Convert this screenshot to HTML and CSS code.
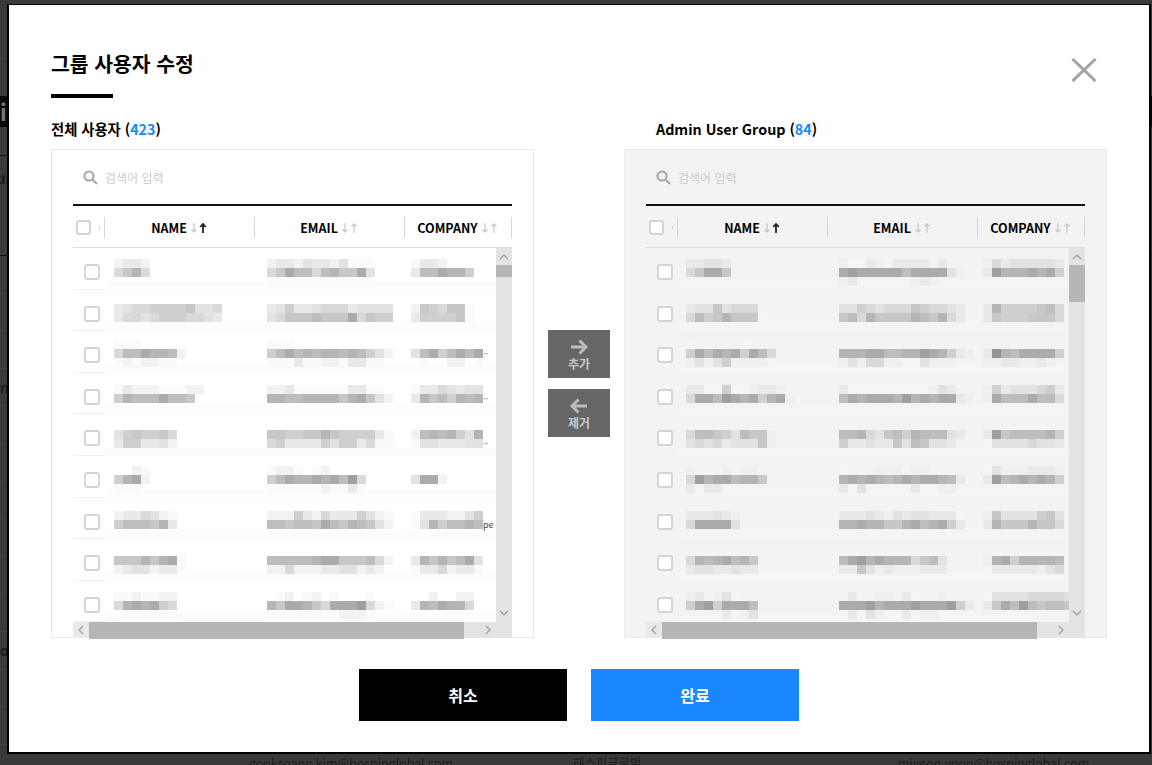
FILE: index.html
```html
<!DOCTYPE html>
<html lang="ko">
<head>
<meta charset="utf-8">
<title>그룹 사용자 수정</title>
<link rel="stylesheet" href="styles.css">
</head>
<body>
<div class="page">
  <div class="bg-row bg-top"></div>
  <div class="bg-tab"><span>i</span></div>
  <div class="bg-row bg-gap"></div>
  <div class="bg-row bg-filter"><span>us</span></div>
  <div class="bg-row bg-list"></div>
  <div class="bg-row bg-list"></div>
  <div class="bg-row bg-list"></div>
  <div class="bg-row bg-list"><span>n</span></div>
  <div class="bg-row bg-list"></div>
  <div class="bg-row bg-list"></div>
  <div class="bg-row bg-list"></div>
  <div class="bg-row bg-list"></div>
  <div class="bg-row bg-list"></div>
  <div class="bg-row bg-list"></div>
  <div class="bg-row bg-list"><span>oi</span></div>
  <div class="bg-row bg-list"></div>
  <div class="bg-row bg-list"></div>
  <div class="bg-emails">
    <span>gooksoang.kim@hospinglobal.com</span>
    <span>헤스피글로벌</span>
    <span>miyeon.yoon@hospinglobal.com</span>
  </div>
</div>

<div class="modal">
  <div class="modal-head">
    <h1 class="title">그룹 사용자 수정</h1>
    <svg class="close" viewBox="0 0 26 24" width="26" height="24"><path d="M1.5 1 24.5 23M24.5 1 1.5 23"/></svg>
  </div>
  <div class="title-rule"></div>

  <div class="columns">
    <section class="col">
      <h2 class="label">전체 사용자 (<b>423</b>)</h2>
      <div class="panel" data-side="left">
        <div class="search">
          <svg class="search-icon" viewBox="0 0 15 15" width="15" height="15"><circle cx="6" cy="6" r="4.6"/><path d="M9.6 9.6 14 14"/></svg>
          <span>검색어 입력</span>
        </div>
        <div class="thead">
          <div class="th th-check"><span class="box box-head"></span><span class="mark"></span></div>
          <div class="th th-wide">NAME<svg class="sort" viewBox="0 0 18 10" width="18" height="10"><path class="off" d="M4 0v9M1.5 6.5 4 9l2.5-2.5"/><path class="on" d="M13 10V1M10.2 4 13 1l2.8 3"/></svg></div>
          <div class="th th-wide">EMAIL<svg class="sort" viewBox="0 0 18 10" width="18" height="10"><path class="off" d="M4 0v9M1.5 6.5 4 9l2.5-2.5"/><path class="off" d="M13 10V1M10.5 3.5 13 1l2.5 2.5"/></svg></div>
          <div class="th th-last">COMPANY<svg class="sort" viewBox="0 0 18 10" width="18" height="10"><path class="off" d="M4 0v9M1.5 6.5 4 9l2.5-2.5"/><path class="off" d="M13 10V1M10.5 3.5 13 1l2.5 2.5"/></svg></div>
        </div>
        <div class="tbody">
          <div class="rows"></div>
          <div class="vbar">
            <svg class="chev" viewBox="0 0 16 17" width="16" height="17"><path d="M4 11l4-4 4 4"/></svg>
            <div class="vtrack"><div class="vthumb vthumb-left"></div></div>
            <svg class="chev" viewBox="0 0 16 17" width="16" height="17"><path d="M4 6l4 4 4-4"/></svg>
          </div>
        </div>
        <div class="hbar">
          <svg class="chev chev-start" viewBox="0 0 16 16" width="16" height="16"><path d="M10 4 6 8l4 4"/></svg>
          <div class="hthumb"></div>
          <svg class="chev" viewBox="0 0 16 16" width="16" height="16"><path d="M6 4l4 4-4 4"/></svg>
          <div class="corner"></div>
        </div>
      </div>
    </section>

    <div class="movers">
      <button class="move" type="button">
        <svg viewBox="0 0 18 16" width="18" height="16"><path d="M1 8H16M9.5 1.5 16 8l-6.500 6.500"/></svg>
        <span>추가</span>
      </button>
      <button class="move" type="button">
        <svg viewBox="0 0 18 16" width="18" height="16"><path d="M17 8H2M8.500 1.500 2 8l6.500 6.500"/></svg>
        <span>제거</span>
      </button>
    </div>

    <section class="col">
      <h2 class="label label-right">Admin User Group (<b>84</b>)</h2>
      <div class="panel panel-right" data-side="right">
        <div class="search">
          <svg class="search-icon" viewBox="0 0 15 15" width="15" height="15"><circle cx="6" cy="6" r="4.6"/><path d="M9.6 9.6 14 14"/></svg>
          <span>검색어 입력</span>
        </div>
        <div class="thead">
          <div class="th th-check"><span class="box box-head"></span><span class="mark"></span></div>
          <div class="th th-wide">NAME<svg class="sort" viewBox="0 0 18 10" width="18" height="10"><path class="off" d="M4 0v9M1.5 6.5 4 9l2.5-2.5"/><path class="on" d="M13 10V1M10.2 4 13 1l2.8 3"/></svg></div>
          <div class="th th-wide">EMAIL<svg class="sort" viewBox="0 0 18 10" width="18" height="10"><path class="off" d="M4 0v9M1.5 6.5 4 9l2.5-2.5"/><path class="off" d="M13 10V1M10.5 3.5 13 1l2.5 2.5"/></svg></div>
          <div class="th th-last">COMPANY<svg class="sort" viewBox="0 0 18 10" width="18" height="10"><path class="off" d="M4 0v9M1.5 6.5 4 9l2.5-2.5"/><path class="off" d="M13 10V1M10.5 3.5 13 1l2.5 2.5"/></svg></div>
        </div>
        <div class="tbody">
          <div class="rows"></div>
          <div class="vbar">
            <svg class="chev" viewBox="0 0 16 17" width="16" height="17"><path d="M4 11l4-4 4 4"/></svg>
            <div class="vtrack"><div class="vthumb vthumb-right"></div></div>
            <svg class="chev" viewBox="0 0 16 17" width="16" height="17"><path d="M4 6l4 4 4-4"/></svg>
          </div>
        </div>
        <div class="hbar">
          <svg class="chev chev-start" viewBox="0 0 16 16" width="16" height="16"><path d="M10 4 6 8l4 4"/></svg>
          <div class="hthumb"></div>
          <svg class="chev" viewBox="0 0 16 16" width="16" height="16"><path d="M6 4l4 4-4 4"/></svg>
          <div class="corner"></div>
        </div>
      </div>
    </section>
  </div>

  <div class="actions">
    <button class="action action-cancel" type="button">취소</button>
    <button class="action action-done" type="button">완료</button>
  </div>
</div>
<script src="app.js"></script>
</body>
</html>
```
FILE: styles.css
```css
* { box-sizing: border-box; }
html, body { margin: 0; height: 100%; overflow: hidden; }
body {
  background: #3a3a3a;
  font-family: "Noto Sans CJK KR", "Noto Sans", sans-serif;
  color: #000;
}
button { font-family: inherit; border: 0; padding: 0; }

/* dimmed page behind the dialog */
.page { height: 765px; display: flex; flex-direction: column; overflow: hidden; color: #1c1c1c; font-size: 12.400px; }
.bg-row { flex: none; border-bottom: 1px solid #444; font-weight: 700; font-size: 14px; }
.bg-top { height: 59px; }
.bg-tab { flex: none; margin-top: 37px; height: 31px; background: #0b0b0b; color: #777; font-size: 22px; font-weight: 700; line-height: 31px; }
.bg-gap { height: 29px; border-bottom-color: #111; }
.bg-filter { height: 100px; border-bottom-color: #111; padding-top: 11px; font-size: 15px; text-indent: -4px; }
.bg-list { height: 37.600px; line-height: 37px; }
.bg-emails { margin-top: auto; margin-bottom: -7px; height: 18px; flex: none; display: grid; grid-template-columns: 324px 325px 1fr; padding-left: 249px; line-height: 18px; }

/* dialog */
.modal {
  position: fixed;
  left: 7px;
  top: 4px;
  width: 1144px;
  height: 750px;
  background: #fff;
  border: 2px solid #000;
  border-top-width: 1px;
  padding: 43px 42px 0;
}
.modal-head { display: flex; justify-content: space-between; align-items: flex-start; }
.title { margin: 0; font-size: 20.400px; line-height: 30px; font-weight: 700; }
.close { margin: 10px 10px 0 0; fill: none; stroke: #a3a3a3; stroke-width: 3; }
.title-rule { width: 62px; height: 4px; background: #000; margin-top: 12px; }

.columns { display: grid; grid-template-columns: 483px 90px 483px; margin-top: 21px; }
.label { margin: 0 0 10px; font-size: 14.300px; line-height: 20px; font-weight: 700; }
.label b { color: #1a87ff; font-weight: 700; }
.label-right { padding-left: 32px; }

.panel { height: 489px; border: 1px solid #e9e9e9; padding: 0 21px; background: #fff; }
.panel-right { background: #f3f3f3; }

.search { height: 54px; display: flex; align-items: center; gap: 7px; padding-left: 10px; font-size: 12px; color: #cbcbcb; }
.search-icon { fill: none; stroke: #a5a5a5; stroke-width: 2; }

.thead { height: 44px; padding-top: 2px; border-top: 2px solid #111; border-bottom: 1px solid #ddd; display: flex; align-items: center; font-size: 12.500px; font-weight: 700; }
.th { height: 21px; border-right: 1.500px solid #d6d6d6; display: flex; align-items: center; justify-content: center; }
.th-check { width: 32px; justify-content: flex-start; padding-left: 3px; }
.th-wide { width: 150px; }
.th-last { width: 107px; }
.sort { margin-left: 3px; fill: none; stroke-width: 1.300; }
.sort .off { stroke: #c9c9c9; }
.sort .on { stroke: #222; stroke-width: 1.800; }
.box { display: block; width: 16px; height: 16px; background: #fff; border: 2px solid #d4d4d4; border-radius: 3px; }
.box-head { width: 15px; height: 15px; }
.mark { width: 1px; height: 3px; background: #ccc; margin-left: 8px; }

.tbody { height: 374px; display: flex; }
.rows { width: 423px; height: 374px; overflow: hidden; }
.row { height: 41.600px; display: flex; overflow: hidden; }
.row-check { flex: none; width: 32px; padding: 16px 0 0 11px; border-bottom: 1px solid #f1f1f1; }
.row-main {
  flex: 1;
  display: grid;
  grid-template-columns: 153px 144px 1fr;
  overflow: hidden;
  background: linear-gradient(#fcfcfc, #fcfcfc) left bottom / 100% 9px no-repeat;
}
.panel-right .row-main { background-image: linear-gradient(#f4f4f4, #f4f4f4); }
.cell { padding-left: 9px; overflow: hidden; display: flex; align-items: flex-start; }
.panel-right .cell { padding-left: 8px; }
.mosaic { flex: none; }
.line { display: flex; height: 9px; }
.px { flex: none; width: 9px; height: 9px; }
.l1 { background: #fafafa; } .l2 { background: #f2f2f2; } .l3 { background: #e9e9e9; }
.l4 { background: #e2e2e2; } .l5 { background: #d9d9d9; } .l6 { background: #cfcfcf; }
.l7 { background: #c7c7c7; } .l8 { background: #bdbdbd; } .l9 { background: #b5b5b5; }
.la { background: #ababab; } .lb { background: #9f9f9f; } .lc { background: #939393; }
.panel-right .l1 { background: #f4f4f4; }
.panel-right .l2 { background: #efefef; }
.tail { flex: none; font-size: 9px; line-height: 9px; color: #999; letter-spacing: -1px; white-space: nowrap; }
.tail-dark { color: #444; font-size: 9px; letter-spacing: 0; }

.vbar { width: 16px; flex: none; background: #e3e3e3; display: flex; flex-direction: column; }
.vtrack { flex: 1; }
.vthumb { background: #b6b6b6; }
.vthumb-left { height: 12px; }
.vthumb-right { height: 37px; }
.chev { display: block; flex: none; fill: none; stroke: #9c9c9c; stroke-width: 1.200; }
.hbar { height: 16px; display: flex; background: #e3e3e3; }
.chev-start { background: #e9e9e9; }
.hthumb { width: 375px; height: 17px; background: #b6b6b6; }
.hbar .chev:not(.chev-start) { margin-left: 16px; }
.corner { width: 16px; }

.movers { display: flex; flex-direction: column; align-items: center; gap: 11px; padding-top: 211px; }
.move { width: 62px; height: 48px; background: #666; color: #c9c9c9; font-size: 12px; font-weight: 700; display: flex; flex-direction: column; align-items: center; padding-top: 9px; line-height: 17px; }
.move svg { display: block; fill: none; stroke: #bcbcbc; stroke-width: 3; }

.actions { display: flex; justify-content: center; gap: 24px; margin-top: 31px; }
.action { width: 208px; height: 52px; color: #fff; font-size: 16px; font-weight: 700; }
.action-cancel { background: #000; }
.action-done { background: #1a87ff; }
```
FILE: app.js
```js
// Anonymised (pixelated) table content: each row holds the y of its mosaic and
// three columns of shade strings, one string per 9px line.
var DATA = {
  left: [
    [259, ["2332","5795"], ["233243324111","57a8858977a4","111111111111"], ["1332","388a996"], ""],
    [304, ["345566667445","355456665543"], ["34633455534444","45777877 7a5766"], ["276577 1","366667 1"], ""],
    [340, ["11100000","588a9982","12122110"], ["11100000000000","68a89899898642","11131122133110"], ["00000000","48a68a8a","01002201"], "···"],
    [385, ["1322211122","69888a8870"], ["22311111133110","9988999979a742"], ["13354344","39786989"], "···"],
    [430, ["4676675","3663342"], ["77667797666631","56333364663511"], ["289896 49","14433344"], "···"],
    [466, ["0021","69a2","1110"], ["12210120000","68a99a9a8b5","11111121131"], ["","4aa2"], ""],
    [511, ["2335421","6888793"], ["22263253336421","88788 7a8798742"], ["13332246","14968898"], "pe"],
    [556, ["77797 9a1","23442331"], ["8888 89aa77785 2","22 52223344232"], ["39797 8a4","13352331"], ""],
    [592, ["1121122","59a9a65","0111111"], ["01201201000100","97aa975aaab521","11111111222100"], ["0020022","3 98a995"], ""]
  ],
  right: [
    [259, ["33443","57aa7"], ["21132033330300","abaaaaa8aaaa42","23000000232000"], ["253444443","3b99 9a9a6"], ""],
    [304, ["344745550","586797771"], ["44654555765543","78597777987953"], ["396666785","376667775"], ""],
    [340, ["1000001100","6a8a9a6a85","2424622221"], ["","9 99aa889 9ba9632","24255221142220"], ["","3c98aaaa6","22332232"], ""],
    [385, ["3311611233200","5aa8ba9a69a2"], ["31111111112430","8a9aaa9b9a9aa32"], ["263444563","2a888a885"], ""],
    [430, ["5887648772","4545344472"], ["88954786988843","63343374874430"], ["3b7888896","144445443"], ""],
    [466, ["200020220","5b9aa8997","303300000"], ["100022202200","9a9a989a9aa9831","31410000311 22"], ["142223332","3b89a9a96","001110110"], ""],
    [511, ["333432","5aaaa4"], ["33343243443331","99a99779a89a63"], ["274444674","397779775"], ""],
    [556, ["59 89a897","34433433"], ["8ab9a9995784","337423222333"], ["29a699998","133333245"], ""],
    [592, ["23024 1","6ab6aaa8","00003124"], ["030022031002","aaab9aaabaaab63","030420030220"], ["1444455554","37a8b87887"], ""]
  ]
};

function mosaic(lines) {
  var root = document.createElement("div");
  root.className = "mosaic";
  lines.forEach(function (text) {
    var line = document.createElement("div");
    line.className = "line";
    text.replace(/\s/g, "").split("").forEach(function (ch) {
      var px = document.createElement("span");
      px.className = "px" + (ch === "0" ? "" : " l" + ch);
      line.appendChild(px);
    });
    root.appendChild(line);
  });
  return root;
}

document.querySelectorAll(".panel").forEach(function (panel) {
  var rows = panel.querySelector(".rows");
  DATA[panel.dataset.side].forEach(function (item, i) {
    var row = document.createElement("div");
    row.className = "row";

    var check = document.createElement("div");
    check.className = "row-check";
    var box = document.createElement("span");
    box.className = "box";
    check.appendChild(box);
    row.appendChild(check);

    var main = document.createElement("div");
    main.className = "row-main";
    var offset = item[0] - (248 + 41.6 * i);
    [item[1], item[2], item[3]].forEach(function (lines, c) {
      var cell = document.createElement("div");
      cell.className = "cell";
      var m = mosaic(lines);
      m.style.marginTop = offset + "px";
      cell.appendChild(m);
      if (c === 2 && item[4]) {
        var tail = document.createElement("span");
        tail.className = "tail" + (item[4] === "pe" ? " tail-dark" : "");
        tail.textContent = item[4];
        tail.style.marginTop = offset + 9 + "px";
        cell.appendChild(tail);
      }
      main.appendChild(cell);
    });
    row.appendChild(main);
    rows.appendChild(row);
  });
});
```
